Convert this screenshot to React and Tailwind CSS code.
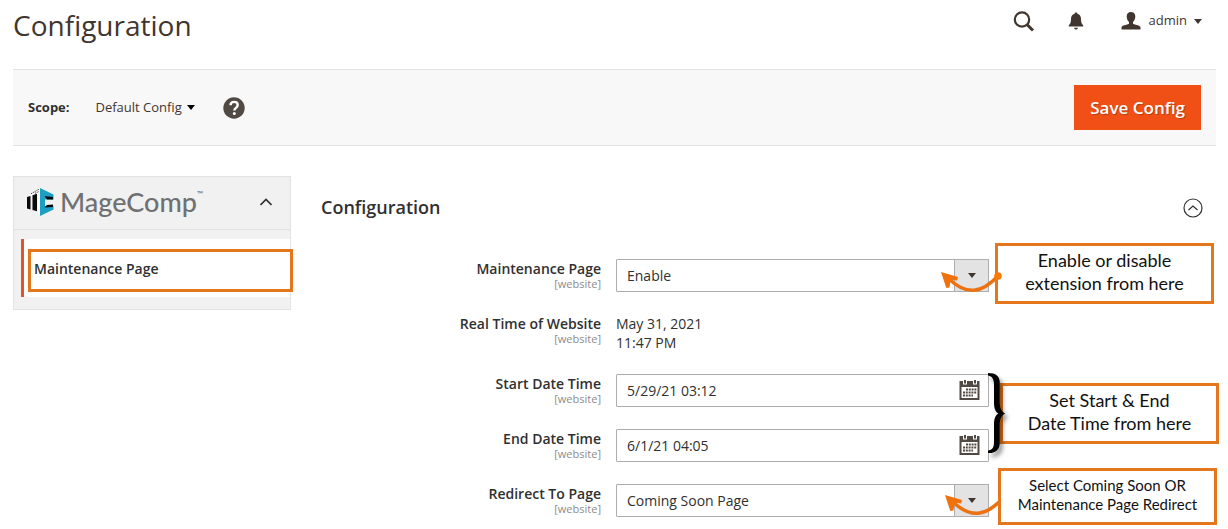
import { useState } from 'react';

function Caret({ className }) {
  return (
    <svg viewBox="0 0 8 5" className={className} fill="currentColor" aria-hidden="true">
      <path d="M0 0h8L4 5z" />
    </svg>
  );
}

function SearchIcon() {
  return (
    <svg viewBox="0 0 22 22" className="size-[22px]" fill="none" stroke="currentColor" aria-hidden="true">
      <circle cx="9" cy="9.500" r="7.200" strokeWidth="2.200" />
      <path d="M14 14.500l6 6" strokeWidth="3" />
    </svg>
  );
}

function BellIcon() {
  return (
    <svg viewBox="0 0 16 18" className="h-[18px] w-4" fill="currentColor" aria-hidden="true">
      <path d="M8 .5c.9 0 1.300.5 1.400 1.200C12 2.400 13 4.500 13 7c0 3.500.8 5 2.200 6.300v1.200H.8v-1.200C2.200 12 3 10.500 3 7c0-2.500 1-4.600 3.600-5.300C6.700 1 7.100.5 8 .5z" />
      <path d="M6 15.700h4c-.3 1.200-1 1.800-2 1.800s-1.700-.6-2-1.800z" />
    </svg>
  );
}

function UserIcon() {
  return (
    <svg viewBox="0 0 20 18" className="h-[18px] w-5" fill="currentColor" aria-hidden="true">
      <path d="M10 0c2.800 0 4.300 1.700 4.300 4.500 0 2.500-1 4.500-2.300 5.500v1.300c0 .6.300.8 1 1l4.500 1.200c1.500.5 2 1.200 2 2.400V17.500H.5v-1.600c0-1.200.5-1.900 2-2.400L7 12.300c.7-.2 1-.4 1-1V10C6.700 9 5.700 7 5.700 4.500 5.700 1.700 7.200 0 10 0z" />
    </svg>
  );
}

function CalendarIcon() {
  return (
    <svg viewBox="0 0 21 20" className="h-5 w-[21px]" aria-hidden="true">
      <path d="M.5 1h20v19H.5z" fill="#514943" />
      <path d="M2.500 7h16v11h-16z" fill="#fff" />
      <path d="M4 1h4v3.500H4zM14 1h4v3.500h-4z" fill="#fff" />
      <path d="M5 0h2v3.500H5zM15 0h2v3.500h-2z" fill="#514943" />
      <path d="M7 9.500h10.500M4 12.500h13.500M4 15.500h10" stroke="#514943" strokeWidth="2" strokeDasharray="2 .8" fill="none" />
    </svg>
  );
}

function MageCompMark() {
  return (
    <svg viewBox="0 0 27 28" className="h-7 w-[27px]" aria-hidden="true">
      <path d="M4 5.500L12.500.500v26L11 26V5.500L4 7.500z" fill="#fff" />
      <path d="M0 9l3.500-1v13.500L0 20.500z" fill="#0b0b0b" />
      <path d="M5.500 7.300l4.500-1.500v17.400l-4.500-1.200z" fill="#0b0b0b" />
      <path d="M4 5.800L12.500 1M8 5.300l4.500-2" stroke="#0b0b0b" strokeWidth=".8" strokeDasharray="1.500 1" />
      <path d="M13 0l13.500 6.500v5H18v6.500h8.500v3.500L13 28z" fill="#1d9fc4" />
      <path d="M17.500 8l8.500 1v2.500h-6zM17.500 19.500l8.500-.5v-2.500l-6 .5z" fill="#0b0b0b" />
    </svg>
  );
}

function Arrow({ className }) {
  return (
    <svg viewBox="0 0 64 30" className={`pointer-events-none absolute h-[30px] w-16 ${className}`} aria-hidden="true">
      <path d="M58 9C42 26 27 29 9 12" fill="none" stroke="#ec7211" strokeWidth="3.500" />
      <path d="M1 5l17 5-.8 3.500-6.500-.8-1.200 7.800-3.200.5z" fill="#f0720c" />
      <circle cx="58" cy="9" r="3.800" fill="#f97a06" />
    </svg>
  );
}

function Brace() {
  return (
    <svg
      viewBox="0 0 18 82"
      className="pointer-events-none absolute -right-4 -top-px z-20 h-[82px] w-[18px] drop-shadow-[3px_4px_2px_rgba(0,0,0,0.4)]"
      aria-hidden="true"
    >
      <path
        d="M1 0C9 0 12.800 3 12.800 10v19c0 6 1.200 9 5.200 11.500-4 2.500-5.200 5.500-5.200 11.500v17c0 8-4.300 11.500-11.800 11v-2.500C5 77 7 75 7 69V52c0-6 1-9.500 4.500-11.500C8 38.500 7 35 7 29V12C7 6 5.500 3.500 1 2.500z"
        fill="#000"
      />
    </svg>
  );
}

function Callout({ className, children }) {
  return (
    <p className={`absolute z-10 flex items-center justify-center whitespace-nowrap border-3 border-[#e4761b] bg-white pb-1 text-center font-[Lato,sans-serif] text-[#111] ${className}`}>
      <span>{children}</span>
    </p>
  );
}

function Row({ label, htmlFor, children }) {
  const Tag = htmlFor ? 'label' : 'div';
  return (
    <div className="grid grid-cols-[280fr_373fr_199fr] gap-x-[15px]">
      <Tag htmlFor={htmlFor} className="block text-right">
        <span className="block text-sm leading-5 font-semibold text-[#303030]">{label}</span>
        <span className="block text-[11px] leading-[10px] text-[#8c8c8c]">[website]</span>
      </Tag>
      <div className="relative">{children}</div>
    </div>
  );
}

function SelectField({ id, options }) {
  const [value, setValue] = useState(options[0]);
  return (
    <>
      <select
        id={id}
        value={value}
        onChange={(e) => setValue(e.target.value)}
        className="block h-[33px] w-full appearance-none rounded-[1px] border border-[#adadad] bg-white px-2.5 text-sm text-[#303030]"
      >
        {options.map((option) => (
          <option key={option}>{option}</option>
        ))}
      </select>
      <span className="pointer-events-none absolute top-0 right-0 flex h-[33px] w-[35px] items-center justify-center border border-[#adadad] bg-[#e3e3e3] text-[#41362f]">
        <Caret className="h-[5px] w-2" />
      </span>
    </>
  );
}

function DateField({ id, initial }) {
  const [value, setValue] = useState(initial);
  return (
    <>
      <input
        id={id}
        type="text"
        value={value}
        onChange={(e) => setValue(e.target.value)}
        className="block h-[33px] w-full rounded-[1px] border border-[#adadad] bg-white pr-10 pl-2.5 text-sm text-[#303030]"
      />
      <button type="button" aria-label="Pick a date" className="absolute top-1.5 right-[9px]">
        <CalendarIcon />
      </button>
    </>
  );
}

export default function App() {
  return (
    <div className="bg-white pr-3 pb-3 pl-[13px] font-['Open_Sans',sans-serif] text-[#41362f]">
      <header className="flex h-[69px] items-start justify-between pt-1.5 pr-3.5">
        <h1 className="text-[28px] leading-[38px]">Configuration</h1>
        <div className="flex h-[30px] items-center">
          <button type="button" aria-label="Search">
            <SearchIcon />
          </button>
          <button type="button" aria-label="Notifications" className="ml-[33px]">
            <BellIcon />
          </button>
          <button type="button" className="ml-[37px] flex items-center text-[13px]">
            <UserIcon />
            <span className="ml-2">admin</span>
            <Caret className="ml-[7px] h-[5px] w-2" />
          </button>
        </div>
      </header>

      <div className="flex h-[77px] items-center border-y border-[#e3e3e3] bg-[#f8f8f8] px-[15px] text-[13px]">
        <span className="font-bold text-[#303030]">Scope:</span>
        <button type="button" className="ml-[26px] flex items-center">
          Default Config
          <Caret className="ml-[5px] h-[5px] w-2 text-black" />
        </button>
        <button type="button" aria-label="Help" className="ml-7">
          <svg viewBox="0 0 22 22" className="size-[22px]" aria-hidden="true">
            <circle cx="11" cy="11" r="10.700" fill="#514943" />
            <path d="M7.500 8.300C7.600 6 9 4.900 11.100 4.900c2.200 0 3.600 1.200 3.600 3 0 2.900-3.400 2.900-3.400 5.600" fill="none" stroke="#fff" strokeWidth="2.400" />
            <circle cx="11.300" cy="16.500" r="1.500" fill="#fff" />
          </svg>
        </button>
        <button type="button" className="ml-auto h-[45px] bg-[#f05016] px-4 text-[17px] font-semibold text-white text-shadow-[1px_1px_1px_rgba(0,0,0,0.25)]">
          Save Config
        </button>
      </div>

      <div className="flex items-start pt-[30px]">
        <nav className="w-[278px] shrink-0 border border-[#e3e3e3] bg-[#f1f1f1] pb-3">
          <button type="button" className="flex h-[53px] w-full items-center border-b border-[#e3e3e3] pr-[18px] pb-0.5 pl-[13px]">
            <MageCompMark />
            <span className="ml-1.5 flex items-start font-[Lato,sans-serif] text-[27px] leading-8 font-medium text-[#6f7072]">
              MageComp<span className="pt-1 text-[8px] leading-2">™</span>
            </span>
            <svg viewBox="0 0 12 8" className="ml-auto h-2 w-3" fill="none" stroke="#303030" strokeWidth="1.600" aria-hidden="true">
              <path d="M.5 7L6 1.500 11.500 7" />
            </svg>
          </button>
          <div className="mt-[9px] ml-[7px] border-l-3 border-[#e6532a] bg-white pt-2.5 pb-[5px] pl-1">
            <a
              href="#maintenance"
              className="-mr-[3px] flex h-[43px] items-center border-3 border-[#e4761b] px-[3px] pb-1 text-sm font-semibold text-[#303030]"
            >
              Maintenance Page
            </a>
          </div>
        </nav>

        <main className="ml-[30px] flex-1 pr-[13px]">
          <div className="flex h-[63px] items-center justify-between">
            <h2 className="pb-0.5 text-lg font-semibold text-[#303030]">Configuration</h2>
            <button type="button" aria-label="Collapse section">
              <svg viewBox="0 0 20 20" className="size-5" fill="none" stroke="#303030" strokeWidth="1.200" aria-hidden="true">
                <circle cx="10" cy="10" r="9" />
                <path d="M5.500 12L10 8l4.500 4" />
              </svg>
            </button>
          </div>

          <form className="mt-5 flex flex-col gap-[22px]" onSubmit={(e) => e.preventDefault()}>
            <Row label="Maintenance Page" htmlFor="enable">
              <SelectField id="enable" options={['Enable', 'Disable']} />
              <Arrow className="-right-[15px] top-2 z-20" />
              <Callout className="-top-4 left-[calc(100%+6px)] h-[61px] w-[219px] text-lg leading-[23px]">
                Enable or disable
                <br />
                extension from here
              </Callout>
            </Row>
            <Row label="Real Time of Website">
              <p className="text-sm leading-[19px] text-[#303030]">
                May 31, 2021
                <br />
                11:47 PM
              </p>
            </Row>
            <Row label="Start Date Time" htmlFor="start">
              <DateField id="start" initial="5/29/21 03:12" />
              <Brace />
              <Callout className="top-[9px] left-[calc(100%+11px)] h-[61px] w-[219px] text-lg leading-[23px]">
                Set Start &amp; End
                <br />
                Date Time from here
              </Callout>
            </Row>
            <Row label="End Date Time" htmlFor="end">
              <DateField id="end" initial="6/1/21 04:05" />
            </Row>
            <Row label="Redirect To Page" htmlFor="redirect">
              <SelectField id="redirect" options={['Coming Soon Page', 'Maintenance Page']} />
              <Arrow className="-right-[19px] top-1.5" />
              <Callout className="-top-4 left-[calc(100%+9px)] h-[57px] w-[219px] text-[15px] leading-[19px]">
                Select Coming Soon OR
                <br />
                Maintenance Page Redirect
              </Callout>
            </Row>
          </form>
        </main>
      </div>
    </div>
  );
}
